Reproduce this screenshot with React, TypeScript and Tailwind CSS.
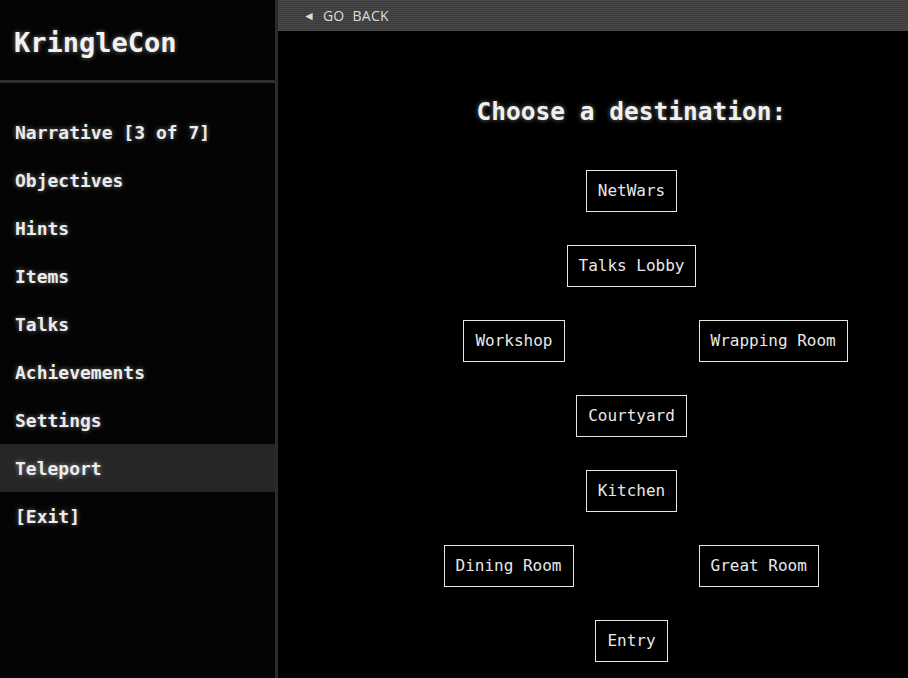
import * as React from "react";

const navItems = [
  "Narrative [3 of 7]",
  "Objectives",
  "Hints",
  "Items",
  "Talks",
  "Achievements",
  "Settings",
  "Teleport",
  "[Exit]",
];

const glow = "[text-shadow:0_0_5px_rgba(255,255,255,0.45)]";
const mono = "font-['DejaVu_Sans_Mono','Liberation_Mono',monospace]";

function Dest({ label }: { label: string }) {
  return (
    <button className={`border border-[#e6e6e6] bg-black px-[11px] py-[9px] text-[16px] leading-[22px] text-[#e8e8e8] ${mono}`}>
      {label}
    </button>
  );
}

export default function App() {
  const active = "Teleport";

  return (
    <div className={`flex h-[678px] w-[908px] overflow-hidden bg-black ${mono}`}>
      <aside className="flex w-[278px] shrink-0 border-r-[3px] border-[#2a2a2a] bg-[#040404]">
        <div className="flex w-full flex-col">
          <div className="flex h-[83px] items-center border-b-[3px] border-[#2e2e2e] px-[14px] pt-[7px]">
            <h1 className={`text-[27px] font-bold text-[#f2f2f2] ${glow}`}>KringleCon</h1>
          </div>
          <nav className="flex flex-col pt-[25px]">
            {navItems.map((item) => (
              <div
                key={item}
                className={`flex h-[48px] items-center px-[15px] text-[18px] font-bold text-[#ececec] ${glow} ${
                  item === active ? "bg-[#262626]" : ""
                }`}
              >
                {item}
              </div>
            ))}
          </nav>
        </div>
      </aside>

      <main className="flex min-w-0 flex-1 flex-col">
        <div className="flex h-[31px] shrink-0 items-center gap-[8px] bg-[repeating-linear-gradient(0deg,#474747_0px,#474747_1px,#3c3c3c_1px,#3c3c3c_2px)] pl-[25px] font-['Open_Sans','Liberation_Sans',sans-serif] text-[14px] text-[#dcdcdc]">
          <span className="text-[12px] leading-none">◄</span>
          <span className="tracking-[0.3px]">GO&nbsp; BACK</span>
        </div>

        <div className="flex flex-col pl-[77px] pt-[65px]">
          <h2 className={`text-center text-[24.5px] font-bold leading-[32px] text-[#f0f0f0] ${glow}`}>
            Choose a destination:
          </h2>

          <div className="mt-[42px] flex flex-col gap-[33px]">
            <div className="flex justify-center">
              <Dest label="NetWars" />
            </div>
            <div className="flex justify-center">
              <Dest label="Talks Lobby" />
            </div>
            <div className="grid grid-cols-2">
              <div className="flex justify-end pr-[67px]">
                <Dest label="Workshop" />
              </div>
              <div className="flex justify-start pl-[67px]">
                <Dest label="Wrapping Room" />
              </div>
            </div>
            <div className="flex justify-center">
              <Dest label="Courtyard" />
            </div>
            <div className="flex justify-center">
              <Dest label="Kitchen" />
            </div>
            <div className="grid grid-cols-2">
              <div className="flex justify-end pr-[58px]">
                <Dest label="Dining Room" />
              </div>
              <div className="flex justify-start pl-[67px]">
                <Dest label="Great Room" />
              </div>
            </div>
            <div className="flex justify-center">
              <Dest label="Entry" />
            </div>
          </div>
        </div>
      </main>
    </div>
  );
}
